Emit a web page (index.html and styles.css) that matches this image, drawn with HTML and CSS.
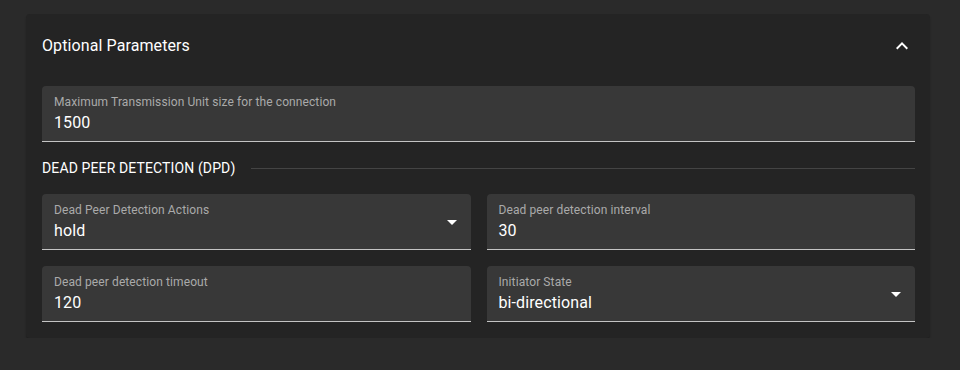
FILE: index.html
```html
<!DOCTYPE html>
<html lang="en">
<head>
    <meta charset="UTF-8">
    <meta name="viewport" content="width=device-width, initial-scale=1.0">
    <title>Optional Parameters</title>
    <link rel="stylesheet" href="styles.css">
</head>
<body>
    <div class="panel">
        <div class="panel-header">
            <span class="panel-title">Optional Parameters</span>
            <svg class="expand-icon" viewBox="0 0 24 24" width="24" height="24">
                <path d="M7.41 15.41 12 10.83l4.59 4.58L18 14l-6-6-6 6z" fill="#fff"/>
            </svg>
        </div>

        <div class="panel-body">
            <div class="field">
                <label>Maximum Transmission Unit size for the connection</label>
                <div class="value">1500</div>
            </div>

            <div class="section-title">
                <span>Dead Peer Detection (DPD)</span>
                <div class="section-line"></div>
            </div>

            <div class="grid">
                <div class="field select">
                    <label>Dead Peer Detection Actions</label>
                    <div class="value">hold</div>
                    <svg class="arrow" viewBox="0 0 24 24" width="24" height="24"><path d="M7 10l5 5 5-5z" fill="#fff"/></svg>
                </div>
                <div class="field">
                    <label>Dead peer detection interval</label>
                    <div class="value">30</div>
                </div>
                <div class="field">
                    <label>Dead peer detection timeout</label>
                    <div class="value">120</div>
                </div>
                <div class="field select">
                    <label>Initiator State</label>
                    <div class="value">bi-directional</div>
                    <svg class="arrow" viewBox="0 0 24 24" width="24" height="24"><path d="M7 10l5 5 5-5z" fill="#fff"/></svg>
                </div>
            </div>
        </div>
    </div>
</body>
</html>
```

FILE: styles.css
```css
body {
    font-family: Roboto, 'Liberation Sans', sans-serif;
    margin: 0;
    padding: 14px 30px 0 26px;
    background-color: #2a2a2a;
    color: #fff;
}
.panel {
    background-color: #242424;
    border-radius: 4px;
    box-shadow: 0 2px 2px rgba(0,0,0,0.25);
}
.panel-header {
    height: 64px;
    padding: 0 16px;
    display: flex;
    justify-content: space-between;
    align-items: center;
}
.panel-title {
    font-size: 16px;
    line-height: 1.5;
    letter-spacing: 0.1px;
}
.expand-icon {
    display: block;
    margin-top: -1px;
}
.panel-body {
    padding: 8px 15px 16px 16px;
}
.field {
    position: relative;
    height: 55px;
    background-color: #383838;
    border-radius: 4px 4px 0 0;
    border-bottom: 1px solid #c4c4c4;
    padding: 0 12px;
}
.field label {
    display: block;
    font-size: 12px;
    line-height: 15px;
    letter-spacing: 0.1px;
    color: #aaa;
    padding-top: 9px;
}
.field .value {
    font-size: 16px;
    line-height: 19px;
    letter-spacing: 0.1px;
    margin-top: 3px;
}
.arrow {
    position: absolute;
    right: 7px;
    top: calc(50% - 12px);
}
.section-title {
    display: flex;
    align-items: center;
    gap: 16px;
    margin: 16px 0;
    font-size: 14px;
    line-height: 20px;
    letter-spacing: 0.12px;
    text-transform: uppercase;
}
.section-line {
    flex: 1;
    height: 1px;
    background-color: #444;
}
.grid {
    display: grid;
    grid-template-columns: 1fr 1fr;
    gap: 16px;
}
```
